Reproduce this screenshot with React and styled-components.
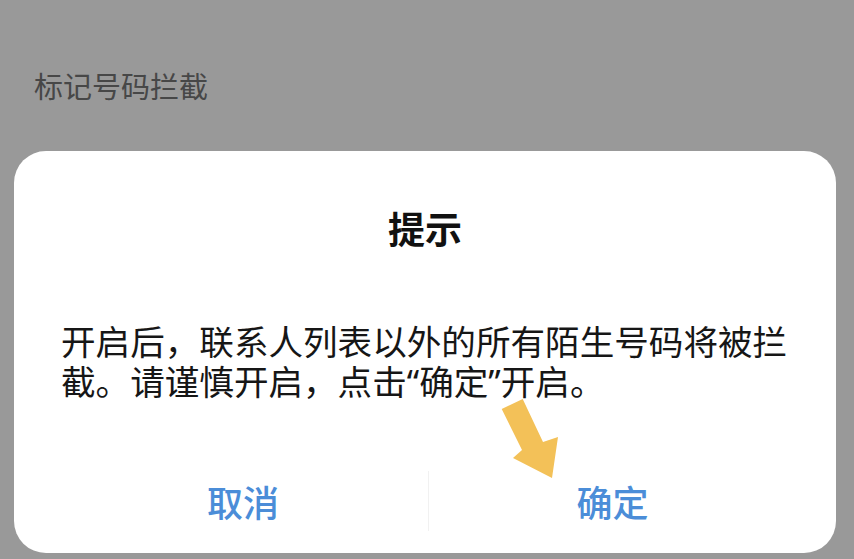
import React from 'react';
import styled, { createGlobalStyle } from 'styled-components';

const GlobalStyle = createGlobalStyle`
  html, body {
    margin: 0;
    padding: 0;
    background: #999999;
  }
  body {
    font-family: "Noto Sans CJK SC", "Noto Sans", sans-serif;
  }
`;

const App = () => {
  return (
    <Page>
      <GlobalStyle />
      <Header>标记号码拦截</Header>
      <Dialog>
        <Title>提示</Title>
        <Message>
          <Line>开启后，联系人列表以外的所有陌生号码将被拦</Line>
          <Line>
            截。请谨慎开启，点击<Quote>“</Quote>确定<Quote>”</Quote>开启。
          </Line>
        </Message>
        <Actions>
          <ActionButton $side="left">取消</ActionButton>
          <ActionButton $side="right">确定</ActionButton>
        </Actions>
        <Arrow viewBox="0 0 80 100" width="80" height="100">
          <polygon
            points="11.7,19 32.7,9 53,52 68,47 62,88 23,68 32,60"
            fill="#f3c158"
          />
        </Arrow>
      </Dialog>
    </Page>
  );
};

export default App;

const Page = styled.div`
  width: 854px;
  height: 559px;
  overflow: hidden;
  display: flex;
  flex-direction: column;
  background: #999999;
`;

const Header = styled.div`
  height: 151px;
  box-sizing: border-box;
  padding: 68px 0 0 34px;
  font-size: 29px;
  line-height: 34px;
  color: #474747;
`;

const Dialog = styled.div`
  position: relative;
  margin: 0 18px 0 14px;
  height: 402px;
  background: #ffffff;
  border-radius: 32px;
  display: flex;
  flex-direction: column;
`;

const Title = styled.div`
  margin-top: 57px;
  text-align: center;
  font-size: 37px;
  line-height: 40px;
  font-weight: 700;
  color: #111111;
`;

const Message = styled.div`
  margin-top: 72px;
  padding: 0 44px 0 47px;
  font-size: 34.6px;
  line-height: 40px;
  color: #161616;
`;

const Line = styled.div`
  white-space: nowrap;
`;

const Quote = styled.span`
  font-family: "Noto Sans", sans-serif;
`;

const Actions = styled.div`
  margin-top: 69px;
  display: grid;
  grid-template-columns: 414px 1fr;
  height: 60px;
`;

const ActionButton = styled.div`
  display: flex;
  align-items: center;
  justify-content: center;
  font-size: 36px;
  line-height: 60px;
  font-weight: 500;
  color: #4b8dd8;
  padding-left: ${(p) => (p.$side === 'left' ? '44px' : '0')};
  padding-right: ${(p) => (p.$side === 'right' ? '40px' : '0')};
  border-left: ${(p) => (p.$side === 'right' ? '1px solid #f1f1f1' : 'none')};
`;

const Arrow = styled.svg`
  position: absolute;
  left: 476px;
  top: 239px;
`;
